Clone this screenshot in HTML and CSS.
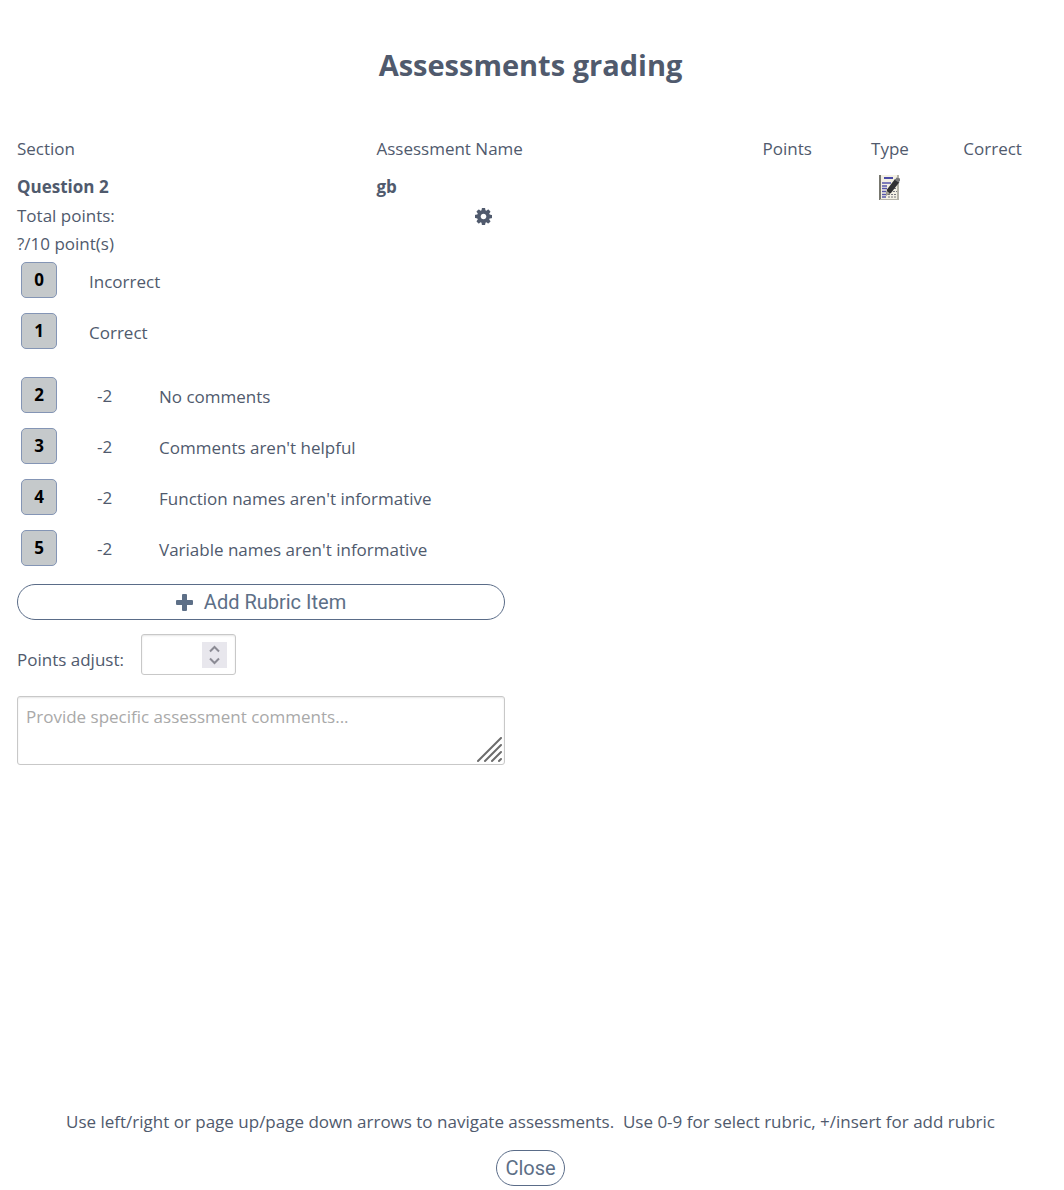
FILE: index.html
```html
<!DOCTYPE html>
<html lang="en">
<head>
<meta charset="utf-8">
<meta name="viewport" content="width=device-width, initial-scale=1">
<title>Assessments grading</title>
<link rel="stylesheet" href="styles.css">
</head>
<body>
<main class="dialog">
  <h1 class="title">Assessments grading</h1>

  <table class="assessments">
    <colgroup>
      <col class="col-wide"><col class="col-wide"><col class="col-narrow"><col class="col-narrow"><col class="col-narrow">
    </colgroup>
    <thead>
      <tr>
        <th class="text">Section</th>
        <th class="text">Assessment Name</th>
        <th>Points</th>
        <th>Type</th>
        <th>Correct</th>
      </tr>
    </thead>
    <tbody>
      <tr>
        <td class="text">Question 2</td>
        <td class="text">gb</td>
        <td></td>
        <td>
          <svg class="type-icon" viewBox="0 0 22 26" role="img" aria-label="Free text">
            <path fill="#f3f0e3" d="M1 1h18v24H1z"/>
            <path fill="#77776f" d="M0 1h2v25H0z"/>
            <path fill="#b5b3a8" d="M18 1h2v25h-2zM1 25h18v1H1z"/>
            <path stroke="#4a4aa6" stroke-width="2" d="M5 4h9"/>
            <path stroke="#5555aa" stroke-width="1.3" d="M3 9h9M3 12h5M3 14.500h5M3 17.500h4M3 20.500h4M3 23h4"/>
            <path stroke="#77777f" stroke-width="1" stroke-dasharray="2 1" d="M9 20.500h9M9 23h9M14 17.500h4M15 14.500h3"/>
            <path fill="#303033" d="M16 5l4.500 3-8.500 11-5 2.500 1-6z"/>
            <path fill="#77777a" d="M17.500 3.500l3.500 1v2l-1.500 2-3.500-2.500z"/>
            <path fill="#aaa69a" d="M7.800 17l3 2.200-4 2.700z"/>
          </svg>
        </td>
        <td></td>
      </tr>
    </tbody>
  </table>

  <section class="grading">
    <div class="points-head">
      <span>Total points:</span>
      <button class="gear" type="button" aria-label="Rubric settings">
        <svg viewBox="0 0 1536 1536" width="17" height="17" aria-hidden="true"><path fill="currentColor" d="M1024 768q0-106-75-181t-181-75-181 75-75 181 75 181 181 75 181-75 75-181zm512-109v222q0 12-8 23t-20 13l-185 28q-19 54-39 91 35 50 107 138 10 12 10 25t-9 23q-27 37-99 108t-94 71q-12 0-26-9l-138-108q-44 23-91 38-16 136-29 186-7 28-36 28h-222q-14 0-24.500-8.500t-11.500-21.500l-28-184q-49-16-90-37l-141 107q-10 9-25 9-14 0-25-11-126-114-165-168-7-10-7-23 0-12 8-23 15-21 51-66.500t54-70.500q-27-50-41-99l-183-27q-13-2-21-12.500t-8-23.500v-222q0-12 8-23t19-13l186-28q14-46 39-92-40-57-107-138-10-12-10-24 0-10 9-23 26-36 98.500-107.500t94.500-71.500q13 0 26 10l138 107q44-23 91-38 16-136 29-186 7-28 36-28h222q14 0 24.500 8.500t11.500 21.500l28 184q49 16 90 37l142-107q9-9 24-9 13 0 25 10 129 119 165 170 7 8 7 22 0 12-8 23-15 21-51 66.500t-54 70.500q26 50 41 98l183 28q13 2 21 12.500t8 23.500z"/></svg>
      </button>
    </div>
    <div class="points-value">?/10 point(s)</div>

    <ul class="rubric">
      <li><button class="key" id="k0" type="button">0</button><label class="desc" for="k0">Incorrect</label></li>
      <li><button class="key" id="k1" type="button">1</button><label class="desc" for="k1">Correct</label></li>
    </ul>
    <ul class="rubric scored">
      <li><button class="key" id="k2" type="button">2</button><span class="score">-2</span><label class="desc" for="k2">No comments</label></li>
      <li><button class="key" id="k3" type="button">3</button><span class="score">-2</span><label class="desc" for="k3">Comments aren't helpful</label></li>
      <li><button class="key" id="k4" type="button">4</button><span class="score">-2</span><label class="desc" for="k4">Function names aren't informative</label></li>
      <li><button class="key" id="k5" type="button">5</button><span class="score">-2</span><label class="desc" for="k5">Variable names aren't informative</label></li>
    </ul>

    <button class="pill add" type="button">
      <svg viewBox="0 0 17 17" width="17" height="17" aria-hidden="true"><path fill="currentColor" d="M7 0h3q1 0 1 1v5h5q1 0 1 1v3q0 1-1 1h-5v5q0 1-1 1H7q-1 0-1-1v-5H1q-1 0-1-1V7q0-1 1-1h5V1q0-1 1-1z"/></svg>
      Add Rubric Item
    </button>

    <div class="adjust">
      <label for="adjust">Points adjust:</label>
      <div class="number">
        <input id="adjust" type="number">
        <svg class="spinner" viewBox="0 0 25 26" aria-hidden="true"><path fill="none" stroke="#8b8b94" stroke-width="2" d="M8 9.500l4.500-4.500 4.500 4.500M8 16.500l4.500 4.500 4.500-4.500"/></svg>
      </div>
    </div>

    <div class="comments">
      <textarea aria-label="Comments" placeholder="Provide specific assessment comments..."></textarea>
      <svg class="grip" viewBox="0 0 26 26" aria-hidden="true"><path fill="none" stroke="#6c6c6c" stroke-width="2" stroke-linecap="round" d="M1 24L24 1M8 24L24 8M15 24L24 15M22 24l2-2"/></svg>
    </div>
  </section>

  <footer class="footer">
    <p class="hint">Use left/right or page up/page down arrows to navigate assessments.&nbsp; Use 0-9 for select rubric, +/insert for add rubric</p>
    <button class="pill" type="button">Close</button>
  </footer>
</main>
</body>
</html>
```
FILE: styles.css
```css
* { box-sizing: border-box; }

body {
  margin: 0;
  background: #fff;
  color: #505a6d;
  font: 17px/28px "Open Sans", "Noto Sans", sans-serif;
}

button, input, textarea { font: inherit; color: inherit; margin: 0; }

.dialog {
  display: flex;
  flex-direction: column;
  min-height: 100vh;
  padding: 44px 20px 4px 17px;
}

.title {
  margin: 0 0 48px;
  font-size: 29px;
  line-height: 42px;
  text-align: center;
}

/* Assessment list */
.assessments {
  width: 100%;
  table-layout: fixed;
  border-collapse: collapse;
}
.col-wide { width: 35%; }
.col-narrow { width: 10%; }
.assessments th, .assessments td { padding: 0; height: 30px; text-align: center; }
.assessments th { height: 38px; padding-bottom: 8px; font-weight: 400; }
.assessments td { font-weight: 700; }
.assessments .text { text-align: left; }
.type-icon { display: block; width: 22px; height: 26px; margin: 0 auto; }

/* Grading panel */
.grading { width: 488px; max-width: 100%; }
.points-head { display: flex; justify-content: space-between; padding-right: 13px; }
.gear { display: flex; align-items: center; padding: 0; border: 0; background: none; cursor: pointer; }
.points-value { margin-bottom: 4px; }

.rubric {
  display: flex;
  flex-direction: column;
  gap: 15px;
  margin: 0;
  padding: 0 0 0 4px;
  list-style: none;
}
.rubric li { display: flex; height: 36px; }
.scored { margin: 28px 0 18px; }
.key {
  width: 36px;
  padding: 0;
  border: 1px solid #8495b5;
  border-radius: 5px;
  background: #c5c9cb;
  color: #000;
  font-weight: 700;
  line-height: 34px;
}
.desc { margin-left: 32px; padding-top: 6px; }
.score { width: 70px; padding: 5px 0 0 40px; }

.pill {
  height: 36px;
  padding: 0 8px;
  border: 1px solid #5a6c88;
  border-radius: 18px;
  background: #fff;
  color: #5d6f87;
  font: 400 20px/34px Roboto, sans-serif;
}
.add { display: flex; align-items: center; justify-content: center; gap: 11px; width: 100%; }

.adjust { display: flex; gap: 17px; margin-top: 14px; }
.adjust label { padding-top: 12px; }
.number {
  display: flex;
  align-items: center;
  width: 95px;
  height: 41px;
  padding: 0 8px;
  border: 1px solid #c8c8c8;
  border-radius: 3px;
  box-shadow: inset 0 1px 2px #0000001a;
}
.number input {
  flex: 1;
  min-width: 0;
  padding: 0;
  border: 0;
  outline: 0;
  background: none;
  appearance: textfield;
}
.spinner { width: 25px; height: 26px; background: #e8e7ed; }

.comments { position: relative; margin-top: 21px; }
.comments textarea {
  display: block;
  width: 100%;
  height: 69px;
  padding: 6px 8px;
  border: 1px solid #c8c8c8;
  border-radius: 3px;
  box-shadow: inset 0 1px 2px #0000001a;
  resize: none;
}
.comments textarea::placeholder { color: #a9a9a9; }
.grip { position: absolute; right: 2px; bottom: 2px; width: 26px; height: 26px; pointer-events: none; }

.footer { margin-top: auto; text-align: center; }
.hint { margin: 0 0 14px; }
.footer .pill { display: block; margin: 0 auto; }
```
